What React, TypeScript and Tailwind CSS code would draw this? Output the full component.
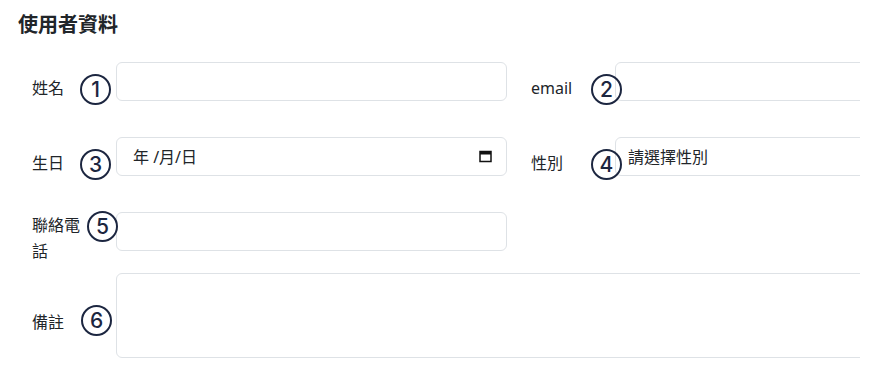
import React from 'react';

const FONT = { fontFamily: '"Noto Sans", "Noto Sans CJK TC", sans-serif' };

const MARKS = [
  { n: '1', cls: 'left-[80px] top-[74px]' },
  { n: '2', cls: 'left-[591px] top-[74px]' },
  { n: '3', cls: 'left-[80px] top-[149px]' },
  { n: '4', cls: 'left-[591px] top-[149px]' },
  { n: '5', cls: 'left-[87px] top-[211px]' },
  { n: '6', cls: 'left-[81px] top-[305px]' },
];

const inputCls =
  'flex-1 h-[39px] rounded-[6px] border border-[#dee2e6] bg-white px-3 text-[16px] text-[#212529] outline-none';

function Field({ label, children }: { label: string; children: React.ReactNode }) {
  return (
    <div className="flex items-center gap-6">
      <label className="w-[60px] shrink-0 pt-[12px] text-[16px] leading-6 text-[#212529]">{label}</label>
      {children}
    </div>
  );
}

function CalendarIcon() {
  return (
    <svg width="13" height="13" viewBox="0 0 13 13">
      <rect x="1" y="1.5" width="11" height="10" fill="none" stroke="#111" strokeWidth="1.5" />
      <rect x="1" y="1.5" width="11" height="3" fill="#111" />
    </svg>
  );
}

export default function App() {
  return (
    <div className="relative w-[882px] h-[384px] bg-white" style={FONT}>
      <div className="w-[860px] h-full overflow-hidden pl-[18px] pt-[13px]">
        <h5 className="text-[20px] leading-6 font-semibold text-[#212529]">使用者資料</h5>

        <div className="mt-[25px] ml-[14px] w-[974px] grid grid-cols-2 gap-x-6 gap-y-[36px]">
          <Field label="姓名">
            <input className={inputCls} />
          </Field>
          <Field label="email">
            <input className={inputCls} />
          </Field>

          <Field label="生日">
            <div className={`${inputCls} flex items-center justify-between pl-4 pr-[14px]`}>
              <span className="leading-6">年 /月/日</span>
              <CalendarIcon />
            </div>
          </Field>
          <Field label="性別">
            <div className={`${inputCls} flex items-center`}>
              <span className="leading-6">請選擇性別</span>
            </div>
          </Field>

          <div className="flex items-start gap-6 h-[39px]">
            <label className="w-[60px] shrink-0 text-[16px] leading-[26px] text-[#212529]">聯絡電話</label>
            <input className={inputCls} />
          </div>
          <div />
        </div>

        <div className="mt-[22px] ml-[14px] w-[974px] flex items-center gap-6">
          <label className="w-[60px] shrink-0 pt-[12px] text-[16px] leading-6 text-[#212529]">備註</label>
          <textarea className="flex-1 h-[85px] rounded-[6px] border border-[#dee2e6] bg-white resize-none outline-none" />
        </div>
      </div>

      {MARKS.map((m) => (
        <div
          key={m.n}
          className={`absolute ${m.cls} w-[31px] h-[31px] rounded-full border-2 border-[#1c2640] bg-transparent flex items-center justify-center text-[21px] font-medium leading-none text-[#1c2640]`}
          style={{ fontFamily: '"Inter", "Roboto", sans-serif' }}
        >
          {m.n}
        </div>
      ))}
    </div>
  );
}
